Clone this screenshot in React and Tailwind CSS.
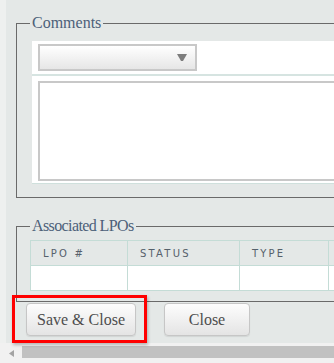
import React from "react";

// Edit form fragment: comments + associated LPOs + action buttons
const SERIF = "'Liberation Serif', 'DejaVu Serif', serif";

const App = () => {
  const columns = [
    { label: "LPO #", w: "w-[97px]" },
    { label: "STATUS", w: "w-[112px]" },
    { label: "TYPE", w: "w-[89px]" },
    { label: "", w: "w-[120px]" },
  ];

  const btn =
    "h-[33px] rounded-[4px] border border-[#c6c6c6] bg-gradient-to-b from-[#fdfdfd] to-[#e4e4e4] text-[16px] text-[#4d4d4d] shadow-[0_1px_1px_rgba(0,0,0,0.08)]";

  return (
    <div className="relative w-[334px] h-[363px] overflow-hidden bg-[#eef0ef] font-serif">
      {/* main panel */}
      <div className="ml-[6px] w-[700px] h-[343px] bg-[#e4e8e7] pt-[14px]">
        {/* Comments */}
        <fieldset className="ml-[10px] w-[660px] border border-[#6a6a6a] px-[13px] pt-[9px] pb-[13px] m-0 min-w-0">
          <legend
            className="px-[2px] text-[16px] leading-[18px] text-[#4c6079]"
            style={{ fontFamily: SERIF }}
          >
            Comments
          </legend>
          <div className="ml-[2px] bg-white border-b border-[#cfe0dc]">
            <div className="px-[6px] py-[3px]">
              <div className="w-[159px] h-[27px] border-2 border-[#c8c8c8] bg-gradient-to-b from-white to-[#e6e6e6] flex items-center justify-end pr-[8px]">
                <svg width="10" height="7" viewBox="0 0 10 7">
                  <polygon points="0,0 10,0 6,7 4,7" fill="#7d7d7d" />
                </svg>
              </div>
            </div>
            <div className="h-[2px] bg-[#d6e4e1]" />
            <div className="px-[6px] pt-[5px] pb-[2px]">
              <div className="h-[100px] border-2 border-[#c8c8c8] bg-white" />
            </div>
          </div>
        </fieldset>

        {/* Associated LPOs */}
        <fieldset className="ml-[10px] mt-[19px] w-[660px] border border-[#6a6a6a] px-[13px] pt-[5px] pb-[10px] m-0 min-w-0">
          <legend
            className="px-[2px] text-[16px] leading-[18px] tracking-[-0.6px] text-[#4c6079]"
            style={{ fontFamily: SERIF }}
          >
            Associated LPOs
          </legend>
          <table className="border-collapse table-fixed">
            <thead>
              <tr>
                {columns.map((c, i) => (
                  <th
                    key={i}
                    className={`${c.w} h-[25px] border border-[#c4dcd6] text-left pl-[12px] font-normal text-[10px] tracking-[2.2px] text-[#56616b]`}
                    style={{ fontFamily: "'DejaVu Sans', Verdana, sans-serif" }}
                  >
                    {c.label}
                  </th>
                ))}
              </tr>
            </thead>
            <tbody>
              <tr>
                {columns.map((c, i) => (
                  <td key={i} className="h-[25px] border border-[#c4dcd6] bg-white" />
                ))}
              </tr>
            </tbody>
          </table>
        </fieldset>

        {/* Buttons */}
        <div className="flex gap-[28px] ml-[20px] mt-[1px]">
          <button className={`w-[110px] ${btn}`} style={{ fontFamily: SERIF }}>
            Save &amp; Close
          </button>
          <button className={`w-[86px] ${btn}`} style={{ fontFamily: SERIF }}>
            Close
          </button>
        </div>
      </div>

      {/* horizontal scrollbar */}
      <div className="h-[20px] bg-[#f1f1f1] flex items-start">
        <div className="w-[22px] h-[14px] mt-[3px] flex items-center justify-center">
          <svg width="5" height="7" viewBox="0 0 5 7">
            <polygon points="5,0 5,7 0,3.5" fill="#a3a3a3" />
          </svg>
        </div>
        <div className="flex-1 h-[12px] mt-[3px] bg-[#c1c1c1]" />
      </div>

      {/* highlight box */}
      <div className="absolute left-[12px] top-[295px] w-[135px] h-[48px] border-[3px] border-[#f00] shadow-[1px_2px_3px_rgba(0,0,0,0.25)]" />
    </div>
  );
};

export default App;
